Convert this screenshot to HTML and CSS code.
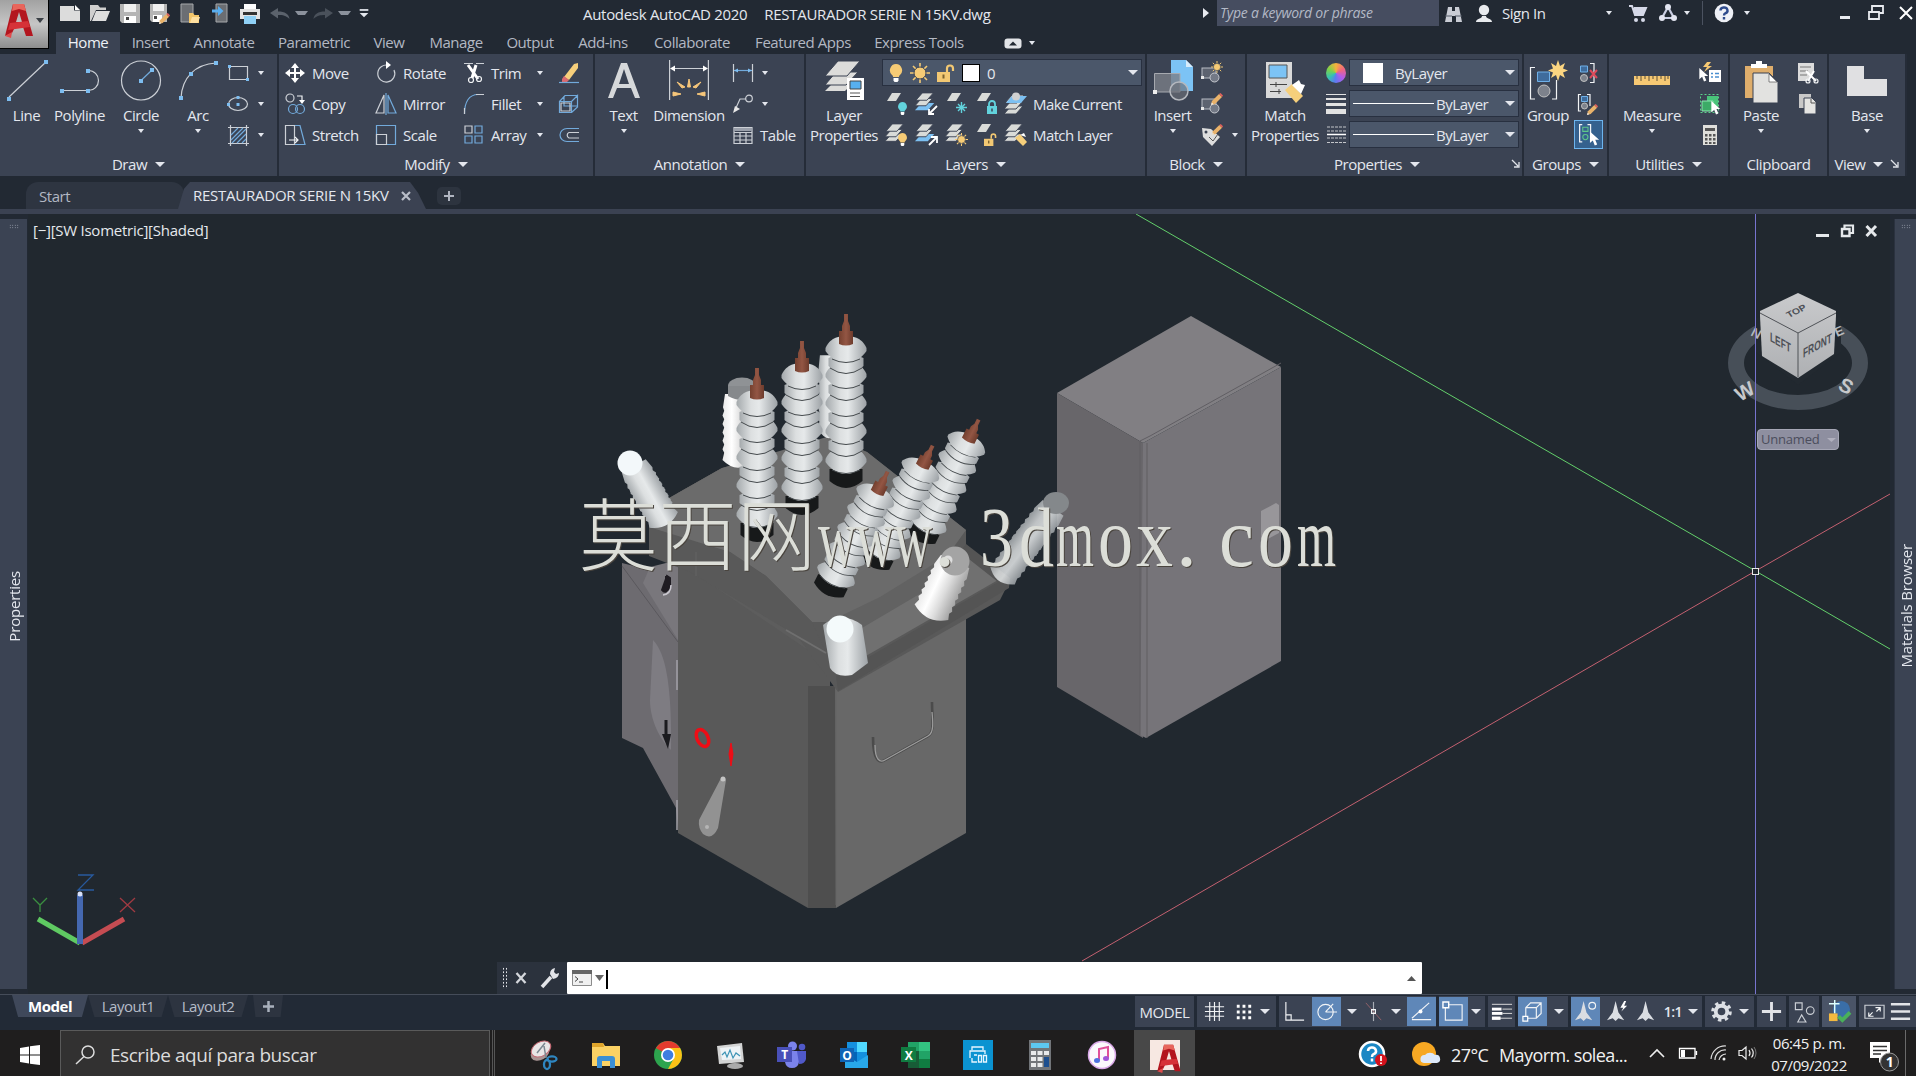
FILE: index.html
```html
<!DOCTYPE html>
<html lang="en">
<head>
<meta charset="utf-8">
<title>Autodesk AutoCAD 2020</title>
<link rel="stylesheet" href="styles.css">
</head>
<body>
<svg class="defs" aria-hidden="true">
  <defs>
    <symbol id="sheet" viewBox="0 0 14 8"><path d="M5 0H14L9 8H0Z" fill="#d9dbd8"/></symbol>
    <symbol id="stack" viewBox="0 0 24 24"><g fill="#d9dbd8" stroke="#3b4353" stroke-width="1"><path d="M7 12H19L12 20H0Z"/><path d="M7 7H19L12 15H0Z"/><path d="M8 1H20L13 9H1Z"/></g></symbol>
    <symbol id="stackblue" viewBox="0 0 24 24"><path d="M7 12H21L14 20H0Z" fill="#7cc0f2"/><g fill="#d9dbd8" stroke="#3b4353"><path d="M7 7H19L12 15H0Z"/><path d="M8 1H20L13 9H1Z"/></g></symbol>
    <symbol id="bulb" viewBox="0 0 14 18"><path d="M7 0a6.3 6.3 0 0 0-4 11c1 .8 1 1.500 1 2h6c0-.5 0-1.200 1-2a6.300 6.300 0 0 0-4-11Z" fill="currentColor"/><path d="M4.500 14h5v2.500l-1 1.500h-3l-1-1.500Z" fill="#fff"/></symbol>
    <symbol id="sun" viewBox="0 0 20 20"><g stroke="#f6cb75" stroke-width="1.600"><path d="M10 0V20M0 10H20M3 3 17 17M17 3 3 17"/></g><circle cx="10" cy="10" r="6" fill="#f6cb75" stroke="#3b4353"/></symbol>
    <symbol id="lock" viewBox="0 0 12 14"><path d="M3 7V4a3 3 0 0 1 6 0V7" fill="none" stroke="currentColor" stroke-width="1.800"/><rect x="1" y="6" width="10" height="8" fill="currentColor"/><path d="M6 8.500v3" stroke="#3b4353" stroke-width="1.500"/></symbol>
    <symbol id="unlock" viewBox="0 0 18 18"><path d="M10 8V4.500a3 3 0 0 1 6 0V7" fill="none" stroke="#f2c873" stroke-width="2.200"/><rect x="0" y="8" width="13" height="10" fill="#f2c873"/><path d="M6.500 10.500v4" stroke="#7b6230" stroke-width="2"/></symbol>
    <symbol id="pointer" viewBox="0 0 10 15"><path d="M0 0V12L3 9.500 5 14.500 7.500 13.500 5.500 8.700H9.500Z" fill="#fff"/></symbol>
    <symbol id="pencil" viewBox="0 0 12 12"><path d="M0 12 1 8 8 1 11 4 4 11Z" fill="#e9b26a"/><path d="M8 1 9.500 0 12 2.500 11 4Z" fill="#e0605c"/><path d="M0 12 .8 9.500 2.500 11.200Z" fill="#eee"/></symbol>
    <symbol id="block" viewBox="0 0 24 24"><rect x="2" y="7" width="14" height="10" fill="#5d6370" stroke="#b8bcc4"/><circle cx="14.500" cy="16.500" r="4.500" fill="#737986" stroke="#c5c8ce"/><path d="M1 15h3v3H1Z" fill="#e8e8e8"/></symbol>
    <symbol id="scale-arrow" viewBox="0 0 20 24"><path d="M10 1 13 13 19 21 13 19 10 22 7 19 1 21 7 13Z" fill="#dadde2"/></symbol>
    <symbol id="acad" viewBox="0 0 32 36"><path d="M10 2H21L30 34H23L20 25H12L9 31 2 34ZM16 10 13 20H19Z" fill="#b3161f" fill-rule="evenodd"/><path d="M10 2H21L23 9 16 7 9 9Z" fill="#e8665c"/><path d="M7 21 25 19 27 25 5 28Z" fill="#d63238"/><path d="M2 34 9 30 8 36Z" fill="#e04b4b"/></symbol>
  </defs>
</svg>

<header class="header">
  <div class="logo"><svg width="32" height="36"><use href="#acad"/></svg><i class="caret dark"></i></div>
  <div class="titlebar">
    <div class="quick">
      <svg class="q" viewBox="0 0 30 24"><path d="M5 5H19V9.500H25V20H5Z" fill="#dcdcdc"/><path d="M20 4 25 9H20Z" fill="#fff"/></svg>
      <svg class="q" viewBox="0 0 30 24"><path d="M5 4H13L15 6.500H21V9H11L6 20H5Z" fill="#cfcfcf"/><path d="M11 10H25L21 20H7Z" fill="#dedede"/></svg>
      <svg class="q" viewBox="0 0 30 24"><path d="M5 3H25V22H7L5 20Z" fill="#b5b5b5"/><path d="M9 3H21V11H9Z" fill="#f0f0f0"/><path d="M9 15H21V22H9Z" fill="#fff"/><path d="M11 16h3v3h-3Z" fill="#444"/></svg>
      <svg class="q" viewBox="0 0 30 24"><path d="M5 3H22V21H7L5 19Z" fill="#b5b5b5"/><path d="M8 3H19V10H8Z" fill="#f0f0f0"/><path d="M8 14H17V21H8Z" fill="#fff"/><path d="M9 15h3v3H9Z" fill="#444"/><svg x="14" y="12" width="11" height="11"><use href="#pencil"/></svg></svg>
      <svg class="q" viewBox="0 0 30 24"><path d="M6 3H18V21H6Z" fill="#6b6e73" stroke="#a6a8ab"/><path d="M14 12h4l1.500 2H24v8H14Z" fill="#f3c66b"/><path d="M17 16h8l-2 6h-8Z" fill="#ffe0a0"/></svg>
      <svg class="q" viewBox="0 0 30 24"><path d="M11 3H22V21H11Z" fill="#6b6e73" stroke="#a6a8ab"/><path d="M7 8.500h6V5l5.500 5-5.500 5v-3.500H7Z" fill="#59aef0"/></svg>
      <svg class="q" viewBox="0 0 30 24"><path d="M9 3H21V9H9Z" fill="#fff"/><path d="M5 8H25V18H5Z" fill="#e3e3e3"/><path d="M8 11H22V14H8Z" fill="#333"/><path d="M9 15H21V23H9Z" fill="#8fd0f5"/></svg>
      <svg class="q" viewBox="0 0 30 24"><path d="M5 12 13 7V10.500C20 10.500 24 13 24.500 18 21 14.500 18 14 13 14V17.500Z" fill="#5b626c"/></svg>
      <span class="qc"><i class="caret mid"></i></span>
      <svg class="q" viewBox="0 0 30 24"><path d="M25 12 17 7V10.500C10 10.500 6 13 5.500 18 9 14.500 12 14 17 14V17.500Z" fill="#4a515b"/></svg>
      <span class="qc"><i class="caret mid"></i></span>
      <svg class="q" viewBox="0 0 30 24"><path d="M10 8.500h10" stroke="#e4e7ee" stroke-width="2"/><path d="M10 12H20L15 17Z" fill="#e4e7ee"/></svg>
    </div>
    <div class="doc-title"><span class="t-app">Autodesk AutoCAD 2020</span><span>RESTAURADOR SERIE N 15KV.dwg</span></div>
    <div class="search-arrow"><svg width="8" height="12"><path d="M1 1 7 6 1 11Z" fill="#e8eaf0"/></svg></div>
    <div class="search">Type a keyword or phrase</div>
    <div class="account">
      <svg style="width:28px" viewBox="0 0 28 24"><path d="M5 21 8 6H12V10H15V6H19L22 21H16V15H12V21Z" fill="#c9ccd4"/><path d="M5 15h7M15 15h7" stroke="#555c69"/></svg>
      <svg style="width:30px" viewBox="0 0 30 24"><circle cx="16" cy="9" r="5.200" fill="#e8eaee"/><path d="M8 21C8 17.500 14 18 14 15H18C18 18 24 17.500 24 21Z" fill="#e8eaee"/></svg>
      <span class="signin">Sign In</span>
      <i class="caret"></i>
      <svg class="cart" viewBox="0 0 20 20"><path d="M1 3H4L7 12H15L18 5H6" fill="#d5d8e8" stroke="#d5d8e8" stroke-width="2"/><circle cx="8" cy="17" r="2" fill="#d5d8e8"/><circle cx="15" cy="17" r="2" fill="#d5d8e8"/></svg>
      <svg class="a360" viewBox="0 0 20 20"><path d="M10 4 4 15H16Z" fill="none" stroke="#c9cde2" stroke-width="2.200"/><circle cx="10" cy="4" r="3" fill="#e3e5f1"/><circle cx="4" cy="15" r="3" fill="#e3e5f1"/><circle cx="16" cy="15" r="3" fill="#e3e5f1"/></svg>
      <i class="caret"></i>
      <i class="vsep"></i>
      <svg class="help" viewBox="0 0 20 20"><circle cx="10" cy="10" r="9.300" fill="#eef0f6"/><path d="M6.500 7.500a3.500 3 0 1 1 4.800 2.800c-1 .5-1.300 1-1.300 2.200M10 14v2.500" fill="none" stroke="#2d4a8c" stroke-width="2.400"/></svg>
      <i class="caret"></i>
      <svg class="w1" viewBox="0 0 12 12"><path d="M1 9h10v3H1Z" fill="#e8eaf0"/></svg>
      <svg class="w2" viewBox="0 0 16 16"><path d="M4 6V1H15V8H11M1 7H11V14H1Z" fill="none" stroke="#e8eaf0" stroke-width="1.800"/></svg>
      <svg class="w3" viewBox="0 0 14 14"><path d="M1 1 13 13M13 1 1 13" stroke="#fff" stroke-width="2"/></svg>
    </div>
  </div>
  <nav class="tabs">
    <span class="on">Home</span><span>Insert</span><span>Annotate</span><span>Parametric</span><span>View</span><span>Manage</span><span>Output</span><span>Add-ins</span><span>Collaborate</span><span>Featured Apps</span><span>Express Tools</span>
    <span class="min"><svg width="18" height="11"><rect x=".5" y=".5" width="17" height="10" rx="3" fill="#e2e4e8"/><path d="M5 7.500 9 3.500 13 7.500Z" fill="#222933"/></svg><i class="caret"></i></span>
  </nav>
</header>

<section class="ribbon">
  <div class="panel draw">
    <div class="body">
      <div class="big"><svg viewBox="0 0 40 40"><path d="M2 37 39 2" class="l"/><path d="M0 37h4v4H0ZM37 0h4v4h-4Z" class="b"/></svg>Line</div>
      <div class="big"><svg viewBox="0 0 40 40"><path d="M2 30.500H28.500a10 10 0 0 0 0-20" class="l"/><path d="M0 29h4v4H0ZM26 29h4v4h-4ZM26 9h4v4h-4Z" class="b"/></svg>Polyline</div>
      <div class="big"><svg viewBox="0 0 40 40"><circle cx="20" cy="20.500" r="19.500" class="l"/><path d="M20 20.500 31 10" class="bl"/><path d="M18 19h4v4h-4ZM29 8h4v4h-4Z" class="b"/></svg>Circle<i class="caret sm"></i></div>
      <div class="big"><svg viewBox="0 0 40 40"><path d="M3 38C4 18 17 4 38 3" class="l"/><path d="M1 36h4v4H1ZM11 12h4v4h-4ZM36 1h4v4h-4Z" class="b"/></svg>Arc<i class="caret sm"></i></div>
      <svg class="ic" viewBox="0 0 24 24"><path d="M3.500 5.500h18v13h-18Z" class="l"/><path d="M2 4h3v3H2Z" class="b"/><path d="M20 17h3v3h-3Z" class="b"/></svg><i class="caret c"></i>
      <svg class="ic" viewBox="0 0 24 24"><ellipse cx="12" cy="12" rx="9.500" ry="6.500" class="l"/><path d="M10.500 4h3v3h-3ZM10.500 11h3v3h-3ZM1 11h3v3H1Z" class="b"/></svg><i class="caret c"></i>
      <svg class="ic" viewBox="0 0 24 24"><path d="M4.500 2V23M20.500 2V23M2 4.500H23M2 20.500H23" class="l"/><path d="M5 12 12 5M5 17 17 5M6 20 20 6M11 20 20 11M16 20 20 16" class="bl"/></svg><i class="caret c"></i>
    </div>
    <div class="name">Draw<i class="caret lg"></i></div>
  </div>
  <div class="panel modify">
    <div class="body">
      <div class="btn"><svg viewBox="0 0 24 24"><path d="M12 2 16 7H13V11H17V8L22 12 17 16V13H13V17H16L12 22 8 17H11V13H7V16L2 12 7 8V11H11V7H8Z" fill="#fff"/></svg>Move</div>
      <div class="btn"><svg viewBox="0 0 24 24"><path d="M15 4.500A8.500 8.500 0 1 0 20 9" class="l"/><path d="M12 0 17 4 12 8Z" fill="#fff"/></svg>Rotate</div>
      <div class="btn"><svg viewBox="0 0 24 24"><path d="M2 2.500H22" class="l" stroke-dasharray="9 3"/><path d="M6 4 16 18M14 4 10 17" stroke="#fff" stroke-width="3"/><circle cx="9" cy="19" r="2.500" class="w"/><circle cx="17" cy="18" r="2.500" class="w"/></svg>Trim</div><i class="caret c"></i>
      <svg class="ic" viewBox="0 0 24 24"><path d="M7 16 17 3 21 2V7L12 19Z" fill="#f6cf7b"/><path d="M7 15 12 19 10 21H5V18Z" fill="#d96a6f"/><path d="M2 21.500H22" class="bl"/></svg>
      <div class="btn"><svg viewBox="0 0 24 24"><circle cx="7" cy="6" r="4" class="l"/><path d="M14 4h5v5" class="w"/><path d="M16 8h6l-3 4Z" fill="#fff"/><circle cx="10" cy="17" r="4.500" class="bl"/><circle cx="17" cy="17" r="4.500" class="bl"/></svg>Copy</div>
      <div class="btn"><svg viewBox="0 0 24 24"><path d="M10 3V21H2Z" class="l"/><path d="M14 3V21H22Z" class="bl"/><path d="M12 1V23" class="bl"/></svg>Mirror</div>
      <div class="btn"><svg viewBox="0 0 24 24"><path d="M2.500 22C2.500 10 7 2.500 16 2.500" class="bl"/><path d="M14 2.500H22M2.500 16V22" class="l"/></svg>Fillet</div><i class="caret c"></i>
      <svg class="ic" viewBox="0 0 24 24"><path d="M2.500 9.500h12v11h-12ZM2.500 9.500 8 3.500H21M14.500 9.500 20.500 3.500V15L14.500 20.500M7 4V14H20" class="bl"/><path d="M4 11h9v8H4Z" class="l"/></svg>
      <div class="btn"><svg viewBox="0 0 24 24"><path d="M2.500 2.500h9v19h-9Z" class="l"/><path d="M12 2.500h5l5 19H12" class="bl"/><path d="M6 17h9M12 14l3 3-3 3" class="w"/></svg>Stretch</div>
      <div class="btn"><svg viewBox="0 0 24 24"><path d="M2.500 2.500h19v19h-19Z" class="bl"/><path d="M2.500 11.500h10v10h-10Z" class="l"/></svg>Scale</div>
      <div class="btn"><svg viewBox="0 0 24 24"><path d="M3 3h7v7H3Z" class="l"/><path d="M13 3h7v7h-7ZM3 13h7v7H3ZM13 13h7v7h-7Z" class="bl" stroke-width="1.600"/></svg>Array</div><i class="caret c"></i>
      <svg class="ic" viewBox="0 0 24 24"><path d="M22 5.500H10a7 6.500 0 0 0 0 13H22" class="bl"/><path d="M22 9.500H12a3 3 0 0 0 0 5.500H22" class="l"/></svg>
    </div>
    <div class="name">Modify<i class="caret lg"></i></div>
  </div>
  <div class="panel annot">
    <div class="body">
      <div class="big"><svg viewBox="0 0 40 40"><path d="M4 38 17 3H23L36 38H31L27 28H13L9 38ZM15 24H25L20 9Z" fill="#d6d8da" fill-rule="evenodd"/></svg>Text<i class="caret sm"></i></div>
      <div class="big"><svg viewBox="0 0 40 40"><path d="M.6 0V40M39.400 0V40M2 8.500H38" class="l"/><path d="M1 8.500 6 5.500V11.500ZM39 8.500 34 5.500V11.500Z" fill="#fff"/><path d="M18.500 27 20 19 21.500 27ZM13 28 8 22 16 27ZM27 28 32 22 24 27ZM12 34 4 32V36ZM28 34 36 32V36Z" fill="#f6c67a" stroke="#f6c67a"/></svg>Dimension</div>
      <svg class="ic" viewBox="0 0 24 24"><path d="M2.500 3V21M21.500 3V21" class="l"/><path d="M3 9.500H21" class="bl"/><path d="M3 9.500l4-2v4ZM21 9.500l-4-2v4Z" class="b"/></svg><span class="cc"><i class="caret"></i></span>
      <svg class="ic" viewBox="0 0 24 24"><path d="M4 18 9 7H15" class="l"/><circle cx="18" cy="6.500" r="3.300" class="l"/><path d="M2 21 4 14 9 17Z" fill="#e8e8e8"/></svg><span class="cc"><i class="caret"></i></span>
      <div class="btn table"><svg viewBox="0 0 24 24"><path d="M3 4.500H21V20.500H3ZM3 9.500H21M3 13H21M3 17H21M9 9.500V20M15 9.500V20" class="l"/><path d="M3 5h18v3H3Z" fill="#9aa0ab"/></svg>Table</div>
    </div>
    <div class="name">Annotation<i class="caret lg"></i></div>
  </div>
  <div class="panel layers">
    <div class="body">
      <div class="big"><svg viewBox="0 0 40 40"><g fill="#dcdcda"><path d="M12 20H32L21 31H1Z"/><path d="M12 12H34L22 25H1Z" stroke="#3b4353"/><path d="M14 1H36L23 16H1Z" stroke="#3b4353"/></g><path d="M23 18H40V40H23Z" fill="#fff"/><path d="M26 21h11v8H26Z" fill="#57b0f0" stroke="#444"/><path d="M26 33h10M26 36.500h10" stroke="#555"/></svg>Layer<br>Properties</div>
      <div class="combo layer-combo">
        <svg width="14" height="18" color="#f6cb75"><use href="#bulb"/></svg><svg width="20" height="20"><use href="#sun"/></svg><svg width="18" height="18"><use href="#unlock"/></svg><i class="sw"></i><span>0</span><i class="caret lg end"></i>
      </div>
      <svg class="ic" viewBox="0 0 24 24"><use href="#sheet" x="1" y="1" width="16" height="8"/><g color="#62d3dd"><use href="#bulb" x="12" y="10" width="11" height="13"/></g></svg>
      <svg class="ic" viewBox="0 0 24 24"><use href="#stackblue" width="22" height="22"/><path d="M15 21 22 14M14 17v5h5" fill="none" stroke="#fff" stroke-width="1.800"/></svg>
      <svg class="ic" viewBox="0 0 24 24"><use href="#sheet" x="1" y="1" width="16" height="8"/><path d="M11 15.500H22M16.500 10V21M13 12l7 7M20 12l-7 7" stroke="#62d3dd" stroke-width="1.400"/></svg>
      <svg class="ic" viewBox="0 0 24 24"><use href="#sheet" x="1" y="1" width="16" height="8"/><g color="#62d3dd"><use href="#lock" x="11" y="8" width="12" height="14"/></g></svg>
      <div class="btn"><svg viewBox="0 0 24 24"><use href="#stack" y="2" width="24" height="24"/><path d="M8 4H23L17 11H2Z" fill="#7cc0f2"/><circle cx="12" cy="4.500" r="4" fill="#d0d0d0"/></svg>Make Current</div>
      <svg class="ic" viewBox="0 0 24 24"><use href="#stack" width="22" height="22"/><g color="#f6cb75"><use href="#bulb" x="12" y="10" width="11" height="13"/></g></svg>
      <svg class="ic" viewBox="0 0 24 24"><use href="#stackblue" width="22" height="22"/><path d="M14 22 21 15M16 14h6v6" stroke="#fff" stroke-width="1.800" fill="none"/></svg>
      <svg class="ic" viewBox="0 0 24 24"><use href="#stack" width="22" height="22"/><use href="#sun" x="10" y="10" width="13" height="13"/></svg>
      <svg class="ic" viewBox="0 0 24 24"><use href="#sheet" x="1" y="1" width="16" height="8"/><use href="#unlock" x="9" y="10" width="13" height="13"/></svg>
      <div class="btn"><svg viewBox="0 0 24 24"><use href="#stack" width="22" height="22"/><path d="M11 15 16 11 23 19 19 23Z" fill="#f6cf7b"/><path d="M16 12 20 10 22 14" fill="#fff"/></svg>Match Layer</div>
    </div>
    <div class="name">Layers<i class="caret lg"></i></div>
  </div>
  <div class="panel blockp">
    <div class="body">
      <div class="big"><svg viewBox="0 0 40 40"><path d="M18 0H33L40 7V31H18Z" fill="#7cc3f5"/><path d="M33 0V7H40Z" fill="#d7ecfb"/><path d="M1.500 13.500H27V32H1.500Z" fill="#7a7e87cc" stroke="#a6a9af"/><circle cx="26" cy="31" r="9" fill="#6a6e77aa" stroke="#b5b8be" stroke-width="1.500"/><path d="M0 30h4v4H0Z" fill="#eee"/></svg>Insert<i class="caret sm"></i></div>
      <svg class="ic" viewBox="0 0 24 24"><use href="#block"/><use href="#sun" x="11" y="0" width="12" height="12"/></svg><i></i>
      <svg class="ic" viewBox="0 0 24 24"><use href="#block"/><use href="#pencil" x="11" y="1" width="12" height="12"/></svg><i></i>
      <svg class="ic" viewBox="0 0 24 24"><path d="M2 5 11 6 20 14 12 23 3 14Z" fill="#dedede"/><circle cx="6" cy="9" r="1.500" fill="#3b4353"/><path d="M9 14l4 4 5-7" stroke="#555" fill="none"/><use href="#pencil" x="12" y="1" width="11" height="11"/></svg><i class="caret c"></i>
    </div>
    <div class="name">Block<i class="caret lg"></i></div>
  </div>
  <div class="panel props">
    <div class="body">
      <div class="big"><svg viewBox="0 0 40 40"><path d="M1 2H27V38H1Z" fill="#d9d9d9"/><path d="M4 5H22V18H4Z" fill="#7cc3f5" stroke="#555"/><path d="M5 24.500H22M5 31.500H16M11 22v5M14 29v5" stroke="#444"/><path d="M20 30 27 24 38 36 31 43Z" fill="#f6cf7b"/><path d="M27 25 34 20 36 24 40 25 36 34Z" fill="#fff"/></svg>Match<br>Properties</div>
      <div class="ic wheel"></div>
      <div class="combo"><i class="sw nb"></i><span class="bl1">ByLayer</span><i class="caret lg end"></i></div>
      <svg class="ic" viewBox="0 0 24 24"><path d="M2 2h20v1H2ZM2 6h20v2H2ZM2 11h20v3H2ZM2 17h20v5H2Z" fill="#e2e2e2"/></svg>
      <div class="combo"><i class="ln"></i><span>ByLayer</span><i class="caret lg end"></i></div>
      <svg class="ic" viewBox="0 0 24 24"><path d="M3 4h19M3 8h19M3 15h19M3 19.500h19" stroke="#c4c6ca" stroke-dasharray="3 1"/><path d="M3 11.500h19" stroke="#fff" stroke-width="1.500"/></svg>
      <div class="combo"><i class="ln"></i><span>ByLayer</span><i class="caret lg end"></i></div>
    </div>
    <div class="name"><span class="mid">Properties<i class="caret lg"></i></span><svg class="launch" viewBox="0 0 8 8"><path d="M0 0 6 6M7 2V7H2" fill="none" stroke="#dfe2e8" stroke-width="1.300"/></svg></div>
  </div>
  <div class="panel groups">
    <div class="body">
      <div class="big"><svg viewBox="0 0 40 40"><path d="M7 7.500H2.500V39H7M24 39h4.500V20" class="w"/><path d="M9.500 12h12v9.500h-12Z" fill="#3f6c9c" stroke="#6fb0e8"/><circle cx="16" cy="31" r="6" fill="#7d828c" stroke="#c0c0c0"/><path d="M30 0 32 6 37 3 35 8.500 40 10.500 35 12.500 37 18 32 15 30 21 28 15 23 18 25 12.500 20 10.500 25 8.500 23 3 28 6Z" fill="#fbd581"/></svg>Group</div>
      <svg class="ic" viewBox="0 0 24 24"><path d="M4.500 5h7v6h-7Z" fill="#3f6c9c" stroke="#6fb0e8"/><circle cx="8" cy="17" r="3.500" fill="#7d828c" stroke="#c0c0c0"/><path d="M14 2.500h4v19h-4" class="w"/><path d="M14 9l7 8M21 9l-7 8" stroke="#dd4a5a" stroke-width="2"/></svg>
      <svg class="ic" viewBox="0 0 24 24"><path d="M5 2.500H2.500V19H5M11 2.500h3V14" class="w"/><path d="M5.500 4.500h6v5h-6Z" fill="#3f6c9c" stroke="#6fb0e8"/><circle cx="8.500" cy="14" r="3" fill="#7d828c" stroke="#c0c0c0"/><use href="#pencil" x="11" y="12" width="11" height="11"/></svg>
      <svg class="ic on" viewBox="0 0 24 24"><path d="M6 2.500H3.500V19H6M11 2.500h3V12" class="w"/><path d="M6.500 5h5v4h-5Z" fill="none" stroke="#5fc98a"/><circle cx="9" cy="14.500" r="2.500" fill="none" stroke="#5fc98a"/><use href="#pointer" x="13" y="9" width="10" height="14"/></svg>
    </div>
    <div class="name">Groups<i class="caret lg"></i></div>
  </div>
  <div class="panel utils">
    <div class="body">
      <div class="big"><svg viewBox="0 0 40 40"><path d="M2 16H38V25H2Z" fill="#f6c873"/><path d="M5 16v3M9 16v5M13 16v3M17 16v5M21 16v3M25 16v5M29 16v3M33 16v5M36 16v3" stroke="#5d5138"/></svg>Measure<i class="caret sm"></i></div>
      <svg class="ic" viewBox="0 0 24 24"><path d="M9 1 5 6H9L6 11 14 5H10L13 1Z" fill="#f6c873"/><use href="#pointer" x="1" y="7" width="10" height="14"/><path d="M11 9h12v12H11Z" fill="#fff"/><path d="M13 12.500h2M17 12.500h4M13 16h2M17 16h4" stroke="#4b8fd0" stroke-width="1.600"/></svg>
      <svg class="ic" viewBox="0 0 24 24"><path d="M2.500 2.500h18v18h-18Z" fill="none" stroke="#5bd28b" stroke-dasharray="2 2"/><path d="M9 4h11v11H9Z" fill="#49c47a"/><path d="M4 9h11v10H4Z" fill="#3cab67" stroke="#8ee5b2"/><use href="#pointer" x="13" y="9" width="10" height="14"/></svg>
      <svg class="ic" viewBox="0 0 24 24"><path d="M5 2H19V22H5Z" fill="#dfdfdb"/><path d="M7 5H17V8H7ZM7 11h2.500v2.500H7ZM11 11h2.500v2.500H11ZM15 11h2.500v2.500H15ZM7 15h2.500v2.500H7ZM11 15h2.500v2.500H11ZM15 15h2.500v2.500H15ZM7 19h2.500v2H7ZM11 19h2.500v2H11ZM15 19h2.500v2H15Z" fill="#555"/></svg>
    </div>
    <div class="name">Utilities<i class="caret lg"></i></div>
  </div>
  <div class="panel clip">
    <div class="body">
      <div class="big"><svg viewBox="0 0 40 40"><path d="M4 6H32V38H4Z" fill="#dfae6c"/><path d="M10 8V4H15V1H21V4H26V8Z" fill="#fff"/><path d="M12 13H28L37 22V43H12Z" fill="#e2e2e0" stroke="#3b4353"/><path d="M28 14V22H36Z" fill="#fff" stroke="#555" stroke-width=".7"/></svg>Paste<i class="caret sm"></i></div>
      <svg class="ic" viewBox="0 0 24 24"><path d="M3 2H19V10L12 20H3Z" fill="#dcdcdc"/><path d="M5 6h11M5 10h8M5 14h7" stroke="#777"/><path d="M11 10 21 20M19 10 13 20" stroke="#fff" stroke-width="2"/><circle cx="13" cy="20" r="2" class="w"/><circle cx="21" cy="20" r="2" class="w"/></svg>
      <svg class="ic" viewBox="0 0 24 24"><path d="M4 2H16V16H4Z" fill="#c8c8c8"/><path d="M9 6H17L21 10V22H9Z" fill="#e4e4e2" stroke="#3b4353"/><path d="M16 7v4h4" fill="none" stroke="#555"/></svg>
    </div>
    <div class="name">Clipboard</div>
  </div>
  <div class="panel viewp">
    <div class="body">
      <div class="big"><svg viewBox="0 0 40 40"><path d="M0 6H17V19H40V36H0Z" fill="#e0e0e2"/></svg>Base<i class="caret sm"></i></div>
    </div>
    <div class="name">View<i class="caret lg"></i><svg class="launch" viewBox="0 0 8 8"><path d="M0 0 6 6M7 2V7H2" fill="none" stroke="#dfe2e8" stroke-width="1.300"/></svg></div>
  </div>
</section>

<nav class="files">
  <div class="ftab start">Start</div>
  <div class="ftab cur">RESTAURADOR SERIE N 15KV<svg width="10" height="10"><path d="M1 1 9 9M9 1 1 9" stroke="#b9bdc8" stroke-width="2.200"/></svg></div>
  <div class="fadd"><svg width="12" height="12"><path d="M6 1V11M1 6H11" stroke="#b0b5c0" stroke-width="2"/></svg></div>
</nav>

<main class="work">
  <aside class="side left"><i class="grip"></i><span>Properties</span></aside>
  <div class="canvas">
    <svg class="scene" viewBox="28 214 1862 780">
      <defs>
        <linearGradient id="wht"><stop offset="0" stop-color="#a4a9ac"/><stop offset=".35" stop-color="#dcdfe0"/><stop offset=".55" stop-color="#e6e9ea"/><stop offset="1" stop-color="#9da2a6"/></linearGradient>
        <linearGradient id="hot"><stop offset="0" stop-color="#e8e8e8"/><stop offset=".3" stop-color="#fff"/><stop offset=".6" stop-color="#dcdcdc"/><stop offset="1" stop-color="#a2a2a2"/></linearGradient>
        <linearGradient id="cop"><stop offset="0" stop-color="#74402f"/><stop offset=".5" stop-color="#935644"/><stop offset="1" stop-color="#6d3b2c"/></linearGradient>
        <linearGradient id="cube" x1="0" y1="0" x2="0" y2="1"><stop offset="0" stop-color="#c9cacc"/><stop offset="1" stop-color="#aeb0b3"/></linearGradient>
        <g id="shed"><path d="M-20.500-1C-18-6-14-13 0-13S18-6 20.500-1V2C17 7 10 14 0 14S-17 7-20.500 2Z" fill="url(#wht)"/><path d="M-14 10Q0 17 14 10" fill="none" stroke="#454a4d" stroke-width="1"/></g>
        <g id="small"><path d="M-17.500-4Q0-12 17.500-4V4C13 8 8 12 0 12S-13 8-17.500 4Z" fill="url(#wht)"/><path d="M-16 6Q0 17 16 6" fill="none" stroke="#454a4d" stroke-width="1"/></g>
        <g id="ins">
          <path d="M-16.500 156V168Q0 182 16.500 168V156Z" fill="#17191a"/>
          <use href="#shed" y="147"/><use href="#small" y="132"/><use href="#shed" y="118"/><use href="#small" y="104"/><use href="#shed" y="90"/><use href="#small" y="76"/><use href="#shed" y="62"/><use href="#small" y="49"/><use href="#shed" y="36"/>
          <path d="M-2 1H2V8L4 13V18H7V31Q0 34-7 31V18H-4V13L-2 8Z" fill="url(#cop)"/>
        </g>
        <g id="post"><path d="M-13-5-15 6-13.800 9-15.500 13-13.800 16-15.500 20-13.800 23-15.500 27-13.800 30-15.500 34-13.800 37-15.500 41-13.800 44-15.500 50Q0 63 15.500 50L13.800 44 15.500 41 13.800 37 15.500 34 13.800 30 15.500 27 13.800 23 15.500 20 13.800 16 15.500 13 13.800 9 15 6 13-5Z"/></g>
      </defs>

      <g class="cabinet">
        <path d="M1057 393 1191 316 1281 367 1143 443Z" fill="#817f83"/>
        <path d="M1057 393 1143 443V738L1057 687Z" fill="#68666a"/>
        <path d="M1143 443 1281 367V661L1146 738 1140 735Z" fill="#767479"/>
        <path d="M1140 441V735M1147 443V738M1140 441 1150 436 1281 363" fill="none" stroke="#605e63"/>
        <path d="M1261 511 1276 503 1279 505V533L1264 541 1261 539Z" fill="#98969a"/>
      </g>

      <g class="tank">
        <path d="M622 563 650 570 678 560V828L676 808 643 748 622 738Z" fill="#6d6b70"/>
        <path d="M643 583 650 567 678 560V640Z" fill="#79777c"/>
        <path d="M622 566 678 642" stroke="#5a585d" fill="none"/>
        <path d="M653 640C662 650 672 670 671 750C660 740 650 720 650 700Z" fill="#7e7c82"/>
        <path d="M666 576V588M662 590q4 5 8-4v-8l-3-2Z" fill="#1f1c22" stroke="#1f1c22" stroke-width="2"/>
        <path d="M671 585Q671 594 663 595" fill="none" stroke="#c9c7ce" stroke-width="1.500"/>
        <path d="M666 720V738" stroke="#1b1b1f" stroke-width="3"/><path d="M662 734H671L668 749Z" fill="#1b1b1f"/>
        <path d="M677 660V690M677 800V830" stroke="#a3a1a8" stroke-width="1.500"/>
        <path d="M678 500H830V908H808L678 833Z" fill="#595959"/>
        <path d="M808 686H836V908H808Z" fill="#4e4e4e"/>
        <path d="M835 660 966 600V833L836 908Z" fill="#686868"/>
        <path d="M649 517 678 493 722 468 730 540 780 600 808 650 690 570 650 553Z" fill="#5d5d5d"/>
        <path d="M662 502 722 468 830 440 867 452 966 530V560L1010 580 1000 600 838 692 800 640 745 557 649 530 650 516Z" fill="#595959"/>
        <path d="M662 502 722 468 830 436 867 452 966 530 940 566 878 600 828 622H812L766 576 730 552 649 530 649 516Z" fill="#6b6b6b"/>
        <path d="M649 527 730 552 766 576 812 622 826 653 690 572 649 556Z" fill="#595959"/>
        <path d="M966 548 998 580 838 672 860 626 940 582Z" fill="#707070"/>
        <path d="M966 544 1010 578 1009 588 838 691 836 676 998 582 960 552Z" fill="#545454"/>
        <path d="M826 623 880 597 940 560 962 548 940 582 862 628 835 640Z" fill="#626262"/>
        <path d="M786 630 826 653" stroke="#6f6f6f" stroke-width="2"/>
        <path d="M696 552V576M836 690V905" stroke="#646464"/>
        <path d="M873 737C873 760 879 764 885 760L928 736C935 732 932 718 932 702" fill="none" stroke="#4b4b4b" stroke-width="2.600"/>
        <path d="M875 745C875 760 880 763 885 760L928 736C934 733 933 722 932 712" fill="none" stroke="#9c9c9c" stroke-width="1.300"/>
        <path d="M699 820 720 780Q723 774 726 780L718 828Q712 841 703 834 698 828 699 820Z" fill="#929292"/>
        <circle cx="707" cy="827" r="2" fill="#b5b5b5"/><circle cx="723" cy="779" r="2.500" fill="#c4c4c4"/>
        <ellipse cx="702.500" cy="738" rx="5.500" ry="9" transform="rotate(-25 702.500 738)" fill="none" stroke="#ee0d16" stroke-width="3.500"/>
        <path d="M731 743 733 754 731 766 729 754Z" fill="#ee0d16" stroke="#ee0d16"/>
      </g>

      <g fill="url(#wht)">
        <g transform="translate(636 470) rotate(-29) scale(1.050 .92)"><use href="#post"/><use href="#post" y="12"/></g>
        <use href="#post" transform="translate(829 362) scale(.7 1.350)"/>
      </g>
      <circle cx="630" cy="463" r="12.500" fill="#f3f8fa"/>
      <g fill="url(#hot)"><use href="#post" transform="translate(738 400) scale(1 1.200)"/></g>
      <ellipse cx="742" cy="386" rx="14" ry="8.500" fill="#8f9295"/><path d="M728 386h28v10q-14 8-28 0Z" fill="#86898c"/>
      <g fill="url(#wht)" opacity=".85"><g transform="translate(1050 512) rotate(37) scale(1 1.040)"><use href="#post"/><use href="#post" y="26"/></g></g>
      <ellipse cx="1056" cy="503" rx="13" ry="11" fill="#84888b"/>

      <use href="#ins" x="846" y="313"/>
      <use href="#ins" x="802" y="340"/>
      <use href="#ins" x="757" y="367"/>
      <use href="#ins" transform="translate(979 419) rotate(26.500) scale(1 .78)"/>
      <use href="#ins" transform="translate(933 445) rotate(26.500) scale(1 .78)"/>
      <use href="#ins" transform="translate(888 471) rotate(26.500) scale(1 .79)"/>

      <use href="#post" transform="translate(953 566) rotate(25) scale(1.200 1.020)" fill="url(#hot)"/>
      <circle cx="955" cy="561" r="14.500" fill="#a4a4a4"/><circle cx="948" cy="560" r="4.500" fill="#dedede"/>
      <path d="M823 625Q842 610 862 625L868 663 852 675Q836 678 830 668Z" fill="url(#wht)"/>
      <circle cx="840" cy="629" r="13.500" fill="#f4fafb"/>

      <g class="axes" fill="none">
        <path d="M1136 214 1752 569M1759 573 1890 649" stroke="#63cf6b"/>
        <path d="M1082 961 1752 573M1759 569 1890 494" stroke="#c36070"/>
        <path d="M1755.500 214V568M1755.500 575V994" stroke="#7774cf"/>
        <rect x="1752.500" y="568.500" width="6" height="6" stroke="#e8e8e8"/>
      </g>

      <g class="viewcube">
        <path d="M1728 363a70 47 0 1 0 140 0a70 47 0 1 0-140 0M1744 363a54 32 0 1 1 108 0a54 32 0 1 1-108 0" fill="#474f58" fill-rule="evenodd"/>
        <path d="M1756 318H1841V352L1798 385 1756 352Z" fill="#222930"/>
        <text class="cp" transform="translate(1740 402) rotate(-30)">W</text><text class="cp" transform="translate(1837 389) rotate(28)">S</text>
        <text class="cps" transform="translate(1750 335) rotate(28)">N</text><text class="cps" transform="translate(1837 337) rotate(-24)">E</text>
        <path d="M1798 293 1836 311V316L1834 354 1798 378 1762 356 1760 316V311Z" fill="url(#cube)"/>
        <path d="M1760 313 1798 333 1836 313M1798 333V377" fill="none" stroke="#4f5257"/>
        <text class="cf" transform="matrix(.86 -.42 .5 .7 1789 318)">TOP</text>
        <text class="cf" transform="matrix(.8 .45 0 1.250 1770 341)">LEFT</text>
        <text class="cf" transform="matrix(.8 -.45 0 1.250 1803 358)">FRONT</text>
        <path d="M1755.500 320V410" stroke="#7774cf"/>
      </g>

      <g class="ucs" fill="none">
        <path d="M38 919 80 943" stroke="#5fca62" stroke-width="5"/><path d="M124 919 82 943" stroke="#c54c52" stroke-width="5"/><path d="M80 895V944" stroke="#4568b0" stroke-width="6"/><circle cx="80" cy="894" r="2.500" fill="#d9e2fb"/>
        <path d="M78 875H93L78 890H94" stroke="#285a9e" stroke-width="1.300"/><path d="M33 898 40 905 47 898M40 905V912" stroke="#3a8f40" stroke-width="1.300"/><path d="M120 898 135 912M135 898 120 912" stroke="#a03a42" stroke-width="1.300"/>
      </g>

      <text class="mark" y="566"><tspan class="han" x="579" y="565" textLength="237">莫西网</tspan><tspan x="818" y="566" textLength="114" lengthAdjust="spacingAndGlyphs">www</tspan><tspan x="934">.</tspan><tspan x="980" textLength="33" lengthAdjust="spacingAndGlyphs">3</tspan><tspan x="1019" textLength="35" lengthAdjust="spacingAndGlyphs">d</tspan><tspan x="1056" textLength="38" lengthAdjust="spacingAndGlyphs">m</tspan><tspan x="1098" textLength="35" lengthAdjust="spacingAndGlyphs">o</tspan><tspan x="1136" textLength="37" lengthAdjust="spacingAndGlyphs">x</tspan><tspan x="1176">.</tspan><tspan x="1219" textLength="35" lengthAdjust="spacingAndGlyphs">c</tspan><tspan x="1258" textLength="35" lengthAdjust="spacingAndGlyphs">o</tspan><tspan x="1297" textLength="39" lengthAdjust="spacingAndGlyphs">m</tspan></text>
    </svg>
    <div class="vp-label">[−][SW Isometric][Shaded]</div>
    <div class="vp-win"><svg width="62" height="14"><path d="M0 10h13v3H0Z" fill="#e6e9ec"/><path d="M28.500 5V1.500H37V9H34" fill="none" stroke="#e6e9ec" stroke-width="2.200"/><path d="M26 5h7.500v7H26Z" fill="none" stroke="#e6e9ec" stroke-width="2.400"/><path d="M50.500 2 60 12M60 2 50.500 12" stroke="#e6e9ec" stroke-width="3"/></svg></div>
    <div class="unnamed">Unnamed<svg width="9" height="6"><path d="M0 1H9L4.500 5Z" fill="#b0b0be"/></svg></div>
    <div class="cmd">
      <div class="cmd-tools"><i class="dots"></i><svg width="12" height="14"><path d="M1.500 2 10.500 12M10.500 2 1.500 12" stroke="#d4d7dc" stroke-width="2.300"/></svg><svg width="20" height="22" viewBox="0 0 20 22"><path d="M2 20 11 10" stroke="#e2e4e8" stroke-width="3.500"/><path d="M10 7Q10 2 15 1L14 5 16 7 19 6Q19 11 13 12Z" fill="#e2e4e8"/></svg></div>
      <div class="cmd-input"><svg width="20" height="16"><path d="M.5 .5h19v15H.5Z" fill="#f0f0f0" stroke="#8c8c8c"/><path d="M0 0h20v4H0Z" fill="#666"/><path d="M3 6.500 6 9 3 11.500M7 12h4" fill="none" stroke="#444"/></svg><svg width="9" height="6"><path d="M0 0H9L4.500 6Z" fill="#666"/></svg><i class="cursor"></i><svg class="up" width="9" height="5"><path d="M0 5H9L4.500 0Z" fill="#555"/></svg></div>
    </div>
  </div>
  <aside class="side right"><i class="grip"></i><span>Materials Browser</span></aside>
</main>

<footer class="status">
  <div class="layouts"><span class="on">Model</span><span>Layout1</span><span>Layout2</span><span class="plus"><svg width="11" height="11"><path d="M5.500 0V11M0 5.500H11" stroke="#a9b0bc" stroke-width="2.500"/></svg></span></div>
  <div class="cells">
    <span class="model">MODEL</span>
    <span class="grp" style="width:79px"><svg class="s" viewBox="0 0 24 24"><path d="M7 2V22M12 2V22M17 2V22M2 7H22M2 12H22M2 17H22" class="w"/></svg><svg class="s" viewBox="0 0 24 24"><path d="M5 6.500H20M5 12.500H20M5 18.500H20" stroke="#fff" stroke-width="3" stroke-dasharray="3 3"/></svg><i class="caret lg"></i></span>
    <span class="grp between" style="width:157px"><svg class="s" viewBox="0 0 24 24"><path d="M3 2V21H22M3 15.500H8.500V21" class="w"/></svg><svg class="s act" viewBox="0 0 24 24"><circle cx="11" cy="12.500" r="8" class="w"/><path d="M11 12.500H23M11 12.500 19 4" class="w"/></svg><i class="caret lg"></i><svg class="s" viewBox="0 0 24 24"><path d="M12 2V22" class="w" opacity=".6"/><path d="M4 3 20 21" stroke="#94626a"/><path d="M10 10h4v4h-4Z" class="w"/></svg><i class="caret lg"></i><svg class="s act" viewBox="0 0 24 24"><path d="M2 20.500H22M2 19 20 3" class="w"/><circle cx="11" cy="12" r="2" fill="#fff"/></svg></span>
    <span class="grp flush" style="width:46px"><svg class="s act" viewBox="0 0 24 24"><path d="M3.500 5H21V21H3.500Z" class="w"/><path d="M1 2h6v6H1Z" fill="#5f87b8" stroke="#fff" stroke-width="1.500"/></svg><i class="caret lg"></i></span>
    <span class="grp" style="width:27px"><svg class="s" viewBox="0 0 24 24"><path d="M2 4.500H23M13 9.500H23M13 14H23M10 19H23" stroke="#ddd"/><path d="M2 9.500H12" stroke="#fff" stroke-width="3"/><path d="M2 14H13" stroke="#fff" stroke-width="3"/><path d="M2 19H11" stroke="#fff" stroke-width="3.500"/></svg></span>
    <span class="grp flush" style="width:50px"><svg class="s act" viewBox="0 0 24 24"><path d="M5 8 10 3H21V14L16 19H5ZM5 8H16L21 3M16 8V19" class="w"/><path d="M2 17h5v5H2Z" fill="#5f87b8" stroke="#fff" stroke-width="1.300"/></svg><i class="caret lg"></i></span>
    <span class="grp flush" style="width:131px"><svg class="s act" viewBox="0 0 24 24"><use href="#scale-arrow" x="0" width="20" height="24"/><circle cx="19" cy="6" r="3.500" class="w"/></svg><svg class="s" viewBox="0 0 24 24"><use href="#scale-arrow" x="0" width="20" height="24"/><path d="M19 1 15 8H18L16 12 22 6H19L21 1Z" fill="#fff"/></svg><svg class="s" viewBox="0 0 24 24"><use href="#scale-arrow" x="1" width="20" height="24"/></svg><b>1:1</b><i class="caret lg"></i></span>
    <span class="grp" style="width:49px"><svg class="s" viewBox="0 0 24 24"><circle cx="12" cy="12" r="6" fill="none" stroke="#dde0e5" stroke-width="4"/><circle cx="12" cy="12" r="9" fill="none" stroke="#dde0e5" stroke-width="3.500" stroke-dasharray="3.500 3.570"/></svg><i class="caret lg"></i></span>
    <span class="grp" style="width:29px"><svg class="s" viewBox="0 0 24 24"><path d="M12 2V22M2 12H22" stroke="#e2e4e8" stroke-width="3"/></svg></span>
    <span class="grp" style="width:30px"><svg class="s" viewBox="0 0 24 24"><path d="M2.500 3h7v7h-7ZM9 15.500 13.500 23H5Z" class="l"/><circle cx="18" cy="11" r="4" class="l"/></svg></span>
    <span class="grp lit" style="width:34px"><svg class="s" viewBox="0 0 24 24"><circle cx="14" cy="10" r="9" fill="#3a6ea8"/><path d="M1 4H12M7 0V14" stroke="#dff" stroke-width="1.500"/><path d="M1 14h9v8H1Z" fill="#f3b93f"/><path d="M11 17 15 21 23 13" fill="none" stroke="#49b05a" stroke-width="4"/></svg></span>
    <span class="grp" style="width:57px"><svg class="s" viewBox="0 0 24 24"><path d="M2 5.500H22V19H2Z" class="l"/><path d="M13 8h5v4M11 17H6v-4M18 8l-4 4M6 17l4-4" class="w"/></svg><svg class="s" viewBox="0 0 24 24"><path d="M2 4.500H22M2 12H22M2 19.500H22" stroke="#e2e4e8" stroke-width="2.500"/></svg></span>
  </div>
</footer>

<div class="taskbar">
  <div class="win"><svg width="20" height="20"><path d="M0 3 9 1.500V9.500H0ZM10 1.300 20 0V9.500H10ZM0 10.500H9V18.500L0 17ZM10 10.500H20V20L10 18.700Z" fill="#fff"/></svg></div>
  <div class="tsearch"><svg width="20" height="20" viewBox="0 0 20 20"><circle cx="13" cy="7" r="6" fill="none" stroke="#ddd" stroke-width="1.500"/><path d="M9 11.500 1 19" stroke="#ddd" stroke-width="1.500"/></svg>Escribe aquí para buscar</div>
  <div class="apps">
    <svg viewBox="0 0 30 30"><ellipse cx="11" cy="13" rx="10" ry="7" transform="rotate(-30 11 13)" fill="#a89494"/><ellipse cx="12" cy="9" rx="10.500" ry="7" transform="rotate(-30 12 9)" fill="#e9e5e6" stroke="#c46a74"/><path d="M8 13 16 3M15 6 17 18" stroke="#7c8790" stroke-width="1.500"/><ellipse cx="18" cy="24.500" rx="3" ry="4.500" fill="none" stroke="#2e86c0" stroke-width="2.300"/><ellipse cx="23" cy="19" rx="4.500" ry="2.600" fill="none" stroke="#2e86c0" stroke-width="2.300"/></svg>
    <svg viewBox="0 0 30 30"><path d="M1 3H12L14 6H29V26H1Z" fill="#fbd264"/><path d="M1 3H12L13 7H1Z" fill="#dfa52b"/><path d="M6 28V19Q6 16 9 16H21Q24 16 24 19V28H19V21H11V28Z" fill="#3b8fd4"/></svg>
    <svg viewBox="0 0 30 30"><circle cx="15" cy="15" r="14" fill="#2da44e"/><path d="M15 15 2.900 8A14 14 0 0 1 27.100 8Z" fill="#e33b2e"/><path d="M15 8H27.100A14 14 0 0 1 15 29L21 18Z" fill="#fbc116"/><circle cx="15" cy="15" r="7" fill="#fff"/><circle cx="15" cy="15" r="5.300" fill="#3f7de0"/></svg>
    <svg viewBox="0 0 30 30"><ellipse cx="20" cy="26" rx="8" ry="3" fill="#aaa"/><path d="M2 6 27 3 29 22 4 24Z" fill="#d3d4d4"/><path d="M5 8 25 6 26 19 7 20Z" fill="#eef3f6"/><path d="M7 15 10 12 12 17 15 10 18 18 21 13 25 16" fill="none" stroke="#3d93b5" stroke-width="1.200"/></svg>
    <svg viewBox="0 0 30 30"><circle cx="15.500" cy="6" r="4.500" fill="#7b83eb"/><circle cx="25" cy="7" r="3.300" fill="#5059c9"/><path d="M8 11H22V22Q21 28 15 28 9 28 8 22Z" fill="#7b83eb"/><path d="M20 11H29V19Q28 24 22 24Z" fill="#5059c9"/><path d="M0 7H15V22H0Z" fill="#4950b8"/><text x="7.500" y="19" class="g">T</text></svg>
    <svg viewBox="0 0 30 30"><path d="M8 2H28V22H8Z" fill="#1490df"/><path d="M18 2H28V12H18Z" fill="#50d9ff"/><path d="M8 12H18V22H8Z" fill="#0364b8"/><path d="M6 15 18 22 29 15V28H6Z" fill="#28a8ea"/><path d="M1 8H15V22H1Z" fill="#0f64b5"/><text x="8" y="20" class="g">O</text></svg>
    <svg viewBox="0 0 30 30"><path d="M7 2H29V28H7Z" fill="#21a366"/><path d="M18 2H29V11H18Z" fill="#33c481"/><path d="M7 11H18V28H7Z" fill="#185c37"/><path d="M18 19H29V28H18Z" fill="#107c41"/><path d="M0 7H15V22H0Z" fill="#107c41"/><text x="7.500" y="19.500" class="g">X</text></svg>
    <svg viewBox="0 0 30 30"><path d="M0 0H30V30H0Z" fill="#0b93d1"/><path d="M9 10V7H20V10M7 18V11H22V14M9 18V22H14M15.500 15.500H18.500V22H15.500ZM20.500 15.500H23.500V22H20.500ZM11 15H14" fill="none" stroke="#e8f6ff" stroke-width="1.300"/></svg>
    <svg viewBox="0 0 30 30"><path d="M4 0H26V30H4Z" fill="#717579"/><path d="M6 3H24V8H6Z" fill="#5dc8f2"/><path d="M6 11h5v4H6ZM12.500 11h5v4h-5ZM19 11h5v4h-5ZM6 17h5v4H6ZM12.500 17h5v4h-5ZM6 23h5v4H6ZM12.500 23h5v4h-5Z" fill="#e8eaeb"/><path d="M19 17h5v10h-5Z" fill="#1d4f8f"/></svg>
    <svg viewBox="0 0 30 30"><circle cx="15" cy="15" r="13.500" fill="#fbf8fc" stroke="#d9a8e8" stroke-width="1.500"/><path d="M12 20V9L21 7V18" fill="none" stroke="#e0509a" stroke-width="2"/><ellipse cx="10" cy="20.500" rx="3" ry="2.500" fill="#4f72e0"/><ellipse cx="19" cy="18.500" rx="3" ry="2.500" fill="#a055d8"/></svg>
    <span class="active"><svg viewBox="0 0 30 30"><path d="M0 0H30V30H0Z" fill="#f7e8e2"/><svg x="4" y="3" width="22" height="24"><use href="#acad"/></svg></svg></span>
  </div>
  <div class="tray">
    <svg class="thelp" viewBox="0 0 30 30"><circle cx="14" cy="14" r="12" fill="#1b87c4" stroke="#fff" stroke-width="2.500"/><path d="M10 11a4 3.500 0 1 1 5.500 3.200c-1.200.6-1.500 1-1.500 2.800M14 18.500v3" fill="none" stroke="#fff" stroke-width="2.500"/><circle cx="23" cy="20" r="6" fill="#d4121c"/><path d="M23 16v5M23 22.500v1.500" stroke="#fff" stroke-width="1.800"/></svg>
    <svg class="wea" viewBox="0 0 30 30"><circle cx="13" cy="14" r="12" fill="#f7a823"/><path d="M13 23a4 4 0 0 1 1-8 6 5 0 0 1 10 0 4 4 0 0 1 2 8Z" fill="#dce8f8"/></svg>
    <span class="temp">27°C</span><span class="wtxt">Mayorm. solea...</span>
    <svg class="i1" viewBox="0 0 16 16"><path d="M1 12 8 5 15 12" fill="none" stroke="#eee" stroke-width="1.600"/></svg>
    <svg class="i2" viewBox="0 0 20 14"><path d="M1.500 2.500H17V12H1.500ZM18.500 5V9" fill="none" stroke="#fff" stroke-width="1.300"/><path d="M3 4H7V11H3Z" fill="#fff"/></svg>
    <svg class="i3" viewBox="0 0 18 18"><g fill="none" stroke="#ddd" stroke-width="1.200"><path d="M1 15A14 14 0 0 1 16 2M5 16A10 10 0 0 1 16 6M9 16A7 7 0 0 1 16 10"/></g><circle cx="14" cy="15" r="1.500" fill="#eee"/></svg>
    <svg class="i4" viewBox="0 0 20 16"><path d="M1 5.500H4L8 2V14L4 10.500H1ZM11 5Q13 8 11 11M13.500 3.500Q17 8 13.500 12.500" fill="none" stroke="#eee" stroke-width="1.200"/><path d="M16 2Q20 8 16 14" fill="none" stroke="#777"/></svg>
    <div class="clock"><span>06:45 p. m.</span><span>07/09/2022</span></div>
    <svg class="notif" viewBox="0 0 32 32"><path d="M0 0H20V16H14L9 21V16H0Z" fill="#fff"/><path d="M3 4.500H17M3 8.500H17M3 12H11" stroke="#333" stroke-width="1.500"/><circle cx="19.500" cy="20" r="9" fill="#333" stroke="#999"/><text x="19.500" y="25" class="n">1</text></svg>
    <i class="edge"></i>
  </div>
</div>
</body>
</html>
```
FILE: styles.css
```css
* { box-sizing: border-box; }
body {
  margin: 0; width: 1916px; height: 1076px; overflow: hidden;
  display: flex; flex-direction: column;
  background: #222933; color: #e4e7ee;
  font: 15px/20px "Open Sans", "Noto Sans", sans-serif; letter-spacing: -.45px;
}
svg { display: block; flex: none; overflow: visible; }
.defs { position: absolute; width: 0; height: 0; }
i { flex: none; }
.l { fill: none; stroke: #ccd0d6; stroke-width: 1.200; }
.w { fill: none; stroke: #f2f4f6; stroke-width: 1.200; }
.bl { fill: none; stroke: #72aadb; stroke-width: 1.200; }
.b { fill: #7dbdf0; }
.caret { width: 0; height: 0; border: 3.500px solid transparent; border-top: 4px solid #e4e7ee; border-bottom: 0; }
.caret.lg { border-width: 5px 5px 0; }
.caret.mid { border-top-color: #8b919c; }
.caret.dark { border-width: 5px 4px 0; border-top-color: #3a3f45; }

/* header */
.header { display: grid; grid-template: 30px 24px / 49px 1fr; height: 54px; flex: none; }
.logo { grid-row: 1 / 3; height: 49px; background: linear-gradient(#a2a2a2, #c6c6c6 50%, #8d8d8d); border-right: 1px solid #000; border-bottom: 1px solid #000; display: flex; align-items: center; gap: 1px; padding: 0 0 8px 3px; }
.titlebar { display: grid; grid-template-columns: 534px 614px 20px 222px 1fr; align-items: start; }
.quick { display: flex; padding-left: 6px; align-items: center; height: 26px; }
.q { width: 30px; height: 24px; }
.qc { width: 13px; display: flex; justify-content: center; }
.quick .q:last-child { width: 26px; }
.doc-title { display: flex; gap: 17px; padding-top: 4px; white-space: nowrap; letter-spacing: -.3px; }
.search-arrow { padding: 7px 0 0 5px; }
.search { height: 26px; background: #464d60; color: #b3b9c6; font-style: italic; font-size: 14px; padding: 3px 3px; letter-spacing: -.25px; }
.account { display: flex; align-items: center; height: 26px; padding-left: 1px; }
.account > svg { height: 24px; }
.signin { width: 108px; padding-left: 4px; }
.account .cart { width: 20px; height: 20px; margin: 0 10px 0 16px; }
.account .a360 { width: 20px; height: 20px; margin-right: 6px; }
.vsep { width: 1px; height: 24px; background: #4b5260; margin: 0 11px 0 12px; }
.account .help { width: 20px; height: 20px; margin-right: 10px; }
.account .w1 { width: 12px; height: 12px; margin-left: 89px; }
.account .w2 { width: 16px; height: 16px; margin-left: 17px; }
.account .w3 { width: 14px; height: 14px; margin-left: 15px; }
.tabs { display: grid; grid-template-columns: 64px 61px 86px 94px 56px 78px 70px 76px 102px 120px 112px 80px; padding: 2px 0 0 7px; color: #b3b8c3; text-align: center; white-space: nowrap; line-height: 20px; }
.tabs .on { background: #3b4353; color: #eef1f6; }
.tabs .min { display: flex; align-items: center; gap: 7px; padding-left: 29px; }

/* ribbon */
.ribbon { display: flex; height: 122px; flex: none; width: 1907px; background: #3b4353; }
.panel { flex: none; border-right: 2px solid #252c38; display: flex; flex-direction: column; }
.body { display: grid; grid-template-rows: repeat(3, 31px); padding-top: 3px; height: 97px; }
.name { height: 25px; display: flex; align-items: center; justify-content: center; gap: 8px; padding-top: 1px; }
.big { grid-row: 1 / 4; display: flex; flex-direction: column; align-items: center; text-align: center; padding-top: 3px; white-space: nowrap; }
.big svg { width: 40px; height: 40px; margin-bottom: 5px; }
.big .caret { margin-top: 4px; }
.btn { display: flex; align-items: center; gap: 5px; padding-left: 4px; white-space: nowrap; }
.btn svg { width: 24px; height: 24px; }
.ic { width: 24px; height: 24px; place-self: center; }
.c { place-self: center; }
.cc { grid-column: span 2; align-self: center; padding-left: 2px; }
.cc .caret { display: block; }
.draw { width: 279px; }
.draw .body { grid-template-columns: 53px 53px 70px 44px 36px 10px; }
.modify { width: 316px; }
.modify .body { grid-template-columns: 91px 88px 72px 20px 38px; }
.annot { width: 211px; }
.annot .body { grid-template-columns: 57px 74px 34px 15px 24px; }
.annot .table { grid-column: 3 / 6; padding-left: 5px; }
.layers { width: 341px; }
.layers .body { grid-template-columns: 76px 30px 30px 30px 30px 1fr; }
.layers .btn { padding-left: 2px; letter-spacing: -.6px; }
.blockp { width: 100px; }
.blockp .body { grid-template-columns: 51px 27px 19px; }
.props { width: 277px; }
.props .body { grid-template-columns: 76px 26px 170px; }
.mid { display: flex; flex: 1; justify-content: center; align-items: center; gap: 8px; padding-left: 3px; }
.props .name { padding-right: 2px; }
.groups { width: 85px; }
.groups .body { grid-template-columns: 48px 32px; }
.utils { width: 121px; }
.utils .body { grid-template-columns: 86px 30px; }
.clip { width: 99px; }
.clip .body { grid-template-columns: 62px 30px; }
.viewp { width: 78px; }
.viewp .body { grid-template-columns: 76px; }
.launch { width: 8px; height: 8px; }
.groups .ic.on { background: #35618e; outline: 1px solid #6db5ee; width: 27px; height: 27px; padding: 1px; }
.combo { align-self: center; height: 27px; background: #4b576a; border: 1px solid #283040; display: flex; align-items: center; padding: 0 3px; }
.layer-combo { grid-column: 2 / 7; width: 260px; padding-left: 6px; gap: 7px; }
.combo .end { margin-left: auto; }
.sw { width: 18px; height: 18px; background: #fff; border: 1px solid #000; }
.sw.nb { width: 20px; height: 20px; border: 0; margin-left: 10px; }
.bl1 { margin-left: 12px; }
.ln { width: 81px; height: 1px; background: #fff; margin-right: 2px; }
.wheel { border-radius: 50%; width: 20px; height: 20px; background: conic-gradient(#f6b13c, #f1667d 17%, #b25bea 35%, #5a7df0 52%, #35c3b0 66%, #7bd24b 82%, #f6b13c); }

/* file tabs */
.files { display: flex; height: 38px; flex: none; padding: 6px 0 0 26px; border-bottom: 5px solid #3b4252; }
.ftab { height: 27px; line-height: 29px; white-space: nowrap; background: #3b4252; border-radius: 12px 12px 0 0; }
.start { width: 158px; padding-left: 13px; background: #2e3541; color: #b3b8c3; margin-right: -6px; }
.cur { width: 248px; padding-left: 15px; display: flex; align-items: center; gap: 12px; letter-spacing: -.25px; clip-path: polygon(0 100%, 6px 25%, 12px 0, 232px 0, 240px 40%, 100% 100%); }
.fadd { width: 24px; height: 18px; margin: 5px 0 0 11px; background: #2d343f; border-radius: 5px; display: grid; place-items: center; }

/* drawing area */
.work { display: flex; height: 780px; flex: none; }
.side { background: #3b4353; flex: none; display: flex; flex-direction: column; align-items: center; margin: 5px 0 5px; }
.side span { writing-mode: vertical-rl; transform: rotate(180deg); letter-spacing: -.2px; }
.left { width: 27px; margin-right: 1px; }
.left span { margin-top: 342px; }
.right { width: 22px; margin-left: 4px; border-left: 1px solid #2b3240; }
.right span { margin-top: 315px; }
.grip { width: 10px; height: 5px; margin-top: 5px; background: radial-gradient(circle, #aab0bd 35%, transparent 45%) 0 0 / 2.500px 2.500px; }
.canvas { position: relative; width: 1862px; background: #21282f; }
.scene { position: absolute; inset: 0; width: 1862px; height: 780px; overflow: hidden; }
.vp-label { position: absolute; left: 5px; top: 6px; letter-spacing: -.25px; color: #e6e9ed; }
.vp-win { position: absolute; left: 1788px; top: 10px; }
.unnamed { position: absolute; left: 1729px; top: 215px; width: 82px; height: 21px; border-radius: 4px; background: #8e8fa0; color: #4b4d5c; border: 1px solid #a6a7b6; font-size: 13px; line-height: 19px; letter-spacing: -.2px; padding-left: 3px; display: flex; align-items: center; gap: 7px; }
.cp { font: bold 20px "Liberation Sans", sans-serif; fill: #c6c8cb; }
.cps { font: bold 13px "Liberation Sans", sans-serif; fill: #b5b8bc; }
.cf { font: bold 10.500px "Liberation Sans", sans-serif; fill: #4d5056; letter-spacing: 0; }
.mark { font: 84px "Liberation Serif", serif; fill: #dcded8; letter-spacing: 0; filter: drop-shadow(1.500px 1.500px 0 #4a453f); }
.han { font: 300 79px "Noto Sans CJK SC", sans-serif; }
.cmd { position: absolute; left: 469px; top: 748px; width: 925px; height: 32px; display: flex; }
.cmd-tools { width: 70px; background: #2b323d; display: flex; align-items: center; gap: 7px; padding-left: 5px; }
.dots { width: 6px; height: 22px; background: radial-gradient(circle, #e2e4e8 40%, transparent 45%) 0 0 / 3px 3.500px; }
.cmd-tools svg:last-child { margin-left: 6px; }
.cmd-input { flex: 1; background: #fff; display: flex; align-items: center; padding: 0 6px 0 5px; gap: 3px; border-radius: 1px; }
.cursor { width: 2px; height: 19px; background: #000; margin-top: 3px; margin-left: -1px; }
.up { margin-left: auto; }

/* status bar */
.status { display: flex; height: 36px; flex: none; border-top: 1px solid #454c59; background: #222a36; justify-content: space-between; }
.layouts { display: flex; padding-left: 12px; height: 22px; color: #b6bcc8; line-height: 22px; }
.layouts span { width: 80px; background: #2d3440; clip-path: polygon(0 0, 100% 0, 92% 100%, 8% 100%); text-align: center; }
.layouts .on { background: #3f485a; color: #fff; font-weight: 700; width: 76px; }
.layouts .plus { width: 30px; margin-left: 5px; display: grid; place-items: center; }
.cells { display: flex; gap: 3px; padding-top: 1px; }
.cells > span { height: 31px; background: #3b4353; display: flex; align-items: center; justify-content: space-evenly; overflow: hidden; }
.cells .between { justify-content: space-between; padding-left: 4px; }
.cells .flush { justify-content: space-between; padding-right: 4px; }
.cells .lit { background: #4a5467; }
.cells .model { width: 59px; letter-spacing: -.45px; }
.cells b { font-weight: 600; font-size: 14px; }
.s { width: 23px; height: 23px; }
.act { width: 29px; height: 29px; padding: 3px; background: #5f87b8; }

/* taskbar */
.taskbar { display: flex; height: 46px; flex: none; background: #1f1e1e; letter-spacing: -.3px; }
.win { width: 60px; display: grid; place-items: center; padding-top: 3px; }
.tsearch { width: 430px; background: #323131; border: 1px solid #5a5a5a; border-bottom: 0; display: flex; align-items: center; gap: 15px; padding: 3px 0 0 14px; font-size: 19px; letter-spacing: -.45px; color: #dcdcdc; }
.apps { display: flex; padding-left: 34px; border-left: 3px double #555; margin-left: 2px; gap: 32px; align-items: center; width: 740px; }
.apps > svg, .active svg { width: 30px; height: 30px; margin-top: 3px; }
.active svg svg { margin: 0; }
.active { width: 61px; height: 46px; margin-left: -15px; background: #484848; display: grid; place-items: center; flex: none; }
.g { font: bold 12px "Open Sans", sans-serif; fill: #fff; text-anchor: middle; }
.n { font: bold 14px "Open Sans", sans-serif; fill: #fff; text-anchor: middle; }
.tray { display: flex; align-items: center; flex: 1; padding-left: 126px; white-space: nowrap; }
.thelp { width: 30px; height: 30px; margin-top: 3px; }
.wea { width: 30px; height: 30px; margin: 3px 0 0 23px; }
.temp, .wtxt { font-size: 18px; letter-spacing: -.6px; padding-top: 3px; color: #f1f1f1; }
.temp { width: 48px; margin-left: 10px; }
.wtxt { width: 150px; }
.i1 { width: 16px; height: 16px; }
.i2 { width: 20px; height: 14px; margin-left: 13px; }
.i3 { width: 18px; height: 18px; margin-left: 12px; }
.i4 { width: 20px; height: 16px; margin-left: 10px; }
.clock { display: flex; flex-direction: column; align-items: center; width: 102px; line-height: 22px; padding-top: 1px; font-size: 15px; letter-spacing: -.4px; color: #f1f1f1; }
.notif { width: 32px; height: 32px; margin: 9px 0 0 10px; }
.edge { width: 1px; height: 46px; background: #6a6a6a; margin-left: 3px; }
```
